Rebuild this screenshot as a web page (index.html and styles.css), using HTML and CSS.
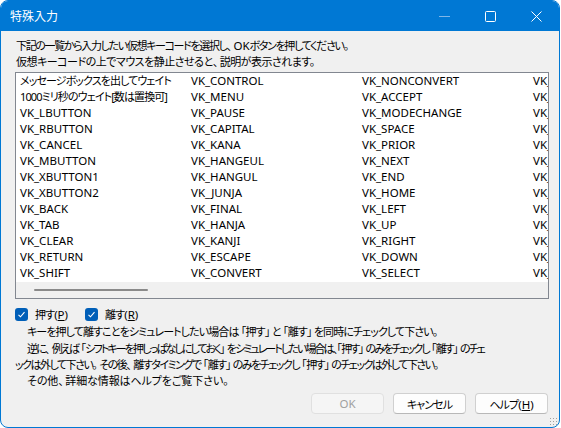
FILE: index.html
```html
<!DOCTYPE html>
<html lang="ja">
<head>
    <meta charset="UTF-8">
    <title>特殊入力</title>
    <link rel="stylesheet" href="styles.css">
</head>
<body>
    <div class="window">
        <div class="titlebar">
            <span class="title">特殊入力</span>
            <div class="controls">
                <span class="ctl ctl-min"><svg width="11" height="11" viewBox="0 0 11 11"><path d="M0 5.5h11" stroke="#7fb6e8" stroke-width="1"/></svg></span>
                <span class="ctl ctl-max"><svg width="11" height="11" viewBox="0 0 11 11"><rect x="0.5" y="0.5" width="10" height="10" rx="1" fill="none" stroke="#fff" stroke-width="1"/></svg></span>
                <span class="ctl ctl-close"><svg width="11" height="11" viewBox="0 0 11 11"><path d="M0.5 0.5l10 10M10.5 0.5l-10 10" stroke="#fff" stroke-width="1"/></svg></span>
            </div>
        </div>

        <div class="content">
            <p class="intro"><span class="ja i1">下記の一覧から入力したい仮想キーコードを選択し<span class="cl">、</span></span>OK<span class="ja i1">ボタンを押してください。</span><br><span class="ja i2">仮想キーコードの上でマウスを静止させると<span class="cl">、</span>説明が表示されます。</span></p>

            <div class="listbox">
                <div class="columns" id="columns">
                    <!-- filled by script -->
                </div>
                <div class="hscroll"><div class="thumb"></div></div>
            </div>

            <div class="checks">
                <label class="check"><span class="box"><svg width="9" height="9" viewBox="0 0 9 9"><path d="M1.5 4.8l2 2 4-4.6" fill="none" stroke="#fff" stroke-width="1.1"/></svg></span><span><span class="ja">押す</span>(<u>P</u>)</span></label>
                <label class="check"><span class="box"><svg width="9" height="9" viewBox="0 0 9 9"><path d="M1.5 4.8l2 2 4-4.6" fill="none" stroke="#fff" stroke-width="1.1"/></svg></span><span><span class="ja">離す</span>(<u>R</u>)</span></label>
            </div>

            <div class="notes ja">
                <p class="note-first">キーを押して離すことをシミュレートしたい場合は<span class="op">「</span>押す<span class="cl">」</span>と<span class="op">「</span>離す<span class="cl">」</span>を同時にチェックして下さい。</p>
                <p><span class="l2">逆に<span class="cl">、</span>例えば<span class="op">「</span>シフトキーを押しっぱなしにしておく<span class="cl">」</span>をシミュレートしたい場合は<span class="cl">、</span><span class="op">「</span>押す<span class="cl">」</span>のみをチェックし<span class="op">「</span>離す<span class="cl">」</span>のチェ</span><br><span class="l3">ックは外して下さい<span class="cl">。</span>その後<span class="cl">、</span>離すタイミングで<span class="op">「</span>離す<span class="cl">」</span>のみをチェックし<span class="op">「</span>押す<span class="cl">」</span>のチェックは外して下さい。</span></p>
                <p class="l4">その他<span class="cl">、</span>詳細な情報はヘルプをご覧下さい。</p>
            </div>

            <div class="buttons">
                <button class="btn" disabled>OK</button>
                <button class="btn"><span class="ja">キャンセル</span></button>
                <button class="btn"><span class="ja">ヘルプ</span>(<u>H</u>)</button>
            </div>
        </div>
        <div class="grip"></div>
    </div>

    <script>
        const keyColumns = [
            ['メッセージボックスを出してウェイト', '1000ミリ秒のウェイト[数は置換可]', 'VK_LBUTTON', 'VK_RBUTTON', 'VK_CANCEL', 'VK_MBUTTON', 'VK_XBUTTON1', 'VK_XBUTTON2', 'VK_BACK', 'VK_TAB', 'VK_CLEAR', 'VK_RETURN', 'VK_SHIFT'],
            ['VK_CONTROL', 'VK_MENU', 'VK_PAUSE', 'VK_CAPITAL', 'VK_KANA', 'VK_HANGEUL', 'VK_HANGUL', 'VK_JUNJA', 'VK_FINAL', 'VK_HANJA', 'VK_KANJI', 'VK_ESCAPE', 'VK_CONVERT'],
            ['VK_NONCONVERT', 'VK_ACCEPT', 'VK_MODECHANGE', 'VK_SPACE', 'VK_PRIOR', 'VK_NEXT', 'VK_END', 'VK_HOME', 'VK_LEFT', 'VK_UP', 'VK_RIGHT', 'VK_DOWN', 'VK_SELECT'],
            ['VK_PRINT', 'VK_EXECUTE', 'VK_SNAPSHOT', 'VK_INSERT', 'VK_DELETE', 'VK_HELP', 'VK_0', 'VK_1', 'VK_2', 'VK_3', 'VK_4', 'VK_5', 'VK_6']
        ];

        const columns = document.getElementById('columns');
        keyColumns.forEach(items => {
            const col = document.createElement('div');
            col.className = 'col';
            items.forEach(name => {
                const row = document.createElement('div');
                row.className = 'item';
                if (!name.startsWith('VK_')) {
                    row.classList.add('ja');
                }
                row.textContent = name;
                col.appendChild(row);
            });
            columns.appendChild(col);
        });
    </script>
</body>
</html>
```

FILE: styles.css
```css
* {
    margin: 0;
    padding: 0;
    box-sizing: border-box;
}

html, body {
    width: 561px;
    height: 428px;
    overflow: hidden;
}

body {
    background: #ffffff;
    font-family: 'Noto Sans', 'Noto Sans CJK JP', sans-serif;
    font-feature-settings: "palt";
    font-size: 11.5px;
    color: #000;
}

/* Japanese runs: narrower, like Yu Gothic UI */
.ja {
    font-size: 11px;
    letter-spacing: -0.9px;
}

/* per-line tracking so wraps land where the dialog has them */
.intro .i1 { letter-spacing: -1.35px; }
.intro .i2 { letter-spacing: -0.5px; }
.notes .l2 { letter-spacing: -1.9px; }
.notes .l3 { letter-spacing: -1.5px; }
.notes .l4 { letter-spacing: -0.1px; }

/* punctuation: full-width form, trimmed on the empty side */
.ja .cl {
    font-feature-settings: normal;
    letter-spacing: -4px;
}

.ja .op {
    font-feature-settings: normal;
    letter-spacing: -0.9px;
    margin-left: -3px;
}

.window {
    position: relative;
    width: 560px;
    height: 428px;
    background: #f0f0f0;
    border: 1px solid #0078d4;
    border-radius: 8px;
    overflow: hidden;
    display: flex;
    flex-direction: column;
}

.titlebar {
    height: 30px;
    background: #0078d4;
    color: #fff;
    display: flex;
    align-items: center;
    padding-left: 9px;
    flex-shrink: 0;
}

.title {
    font-size: 12px;
    flex: 1;
}

.controls {
    display: flex;
    height: 100%;
}

.ctl {
    width: 46px;
    height: 100%;
    display: flex;
    align-items: center;
    justify-content: center;
}

.ctl svg {
    display: block;
}

.content {
    padding: 7px 11px 0 14px;
    flex: 1;
}

.intro {
    line-height: 16px;
    padding-left: 1px;
}

.listbox {
    margin-top: 2px;
    width: 534px;
    height: 227px;
    border: 1px solid #828790;
    background: #fff;
    display: flex;
    flex-direction: column;
    overflow: hidden;
}

.columns {
    display: flex;
    flex: 1;
    padding-left: 4px;
    overflow: hidden;
}

.col {
    width: 171px;
    flex-shrink: 0;
    white-space: nowrap;
}

.item {
    height: 16px;
    line-height: 16px;
}

.hscroll {
    height: 16px;
    background: #f0f0f0;
    position: relative;
    flex-shrink: 0;
}

.thumb {
    position: absolute;
    left: 18px;
    top: 7px;
    width: 114px;
    height: 2px;
    background: #8a8a8a;
    border-radius: 1px;
}

.checks {
    display: flex;
    gap: 17px;
    margin-top: 7px;
    height: 16px;
    align-items: center;
}

.check {
    display: flex;
    align-items: center;
    gap: 7px;
}

.box {
    width: 13px;
    height: 13px;
    background: #005fb8;
    border-radius: 3px;
    display: flex;
    align-items: center;
    justify-content: center;
}

.box svg {
    display: block;
}

.notes {
    margin-top: 2px;
    line-height: 16px;
}

.notes p {
    text-indent: 12px;
    white-space: nowrap;
}

.notes .note-first {
    margin-bottom: 1px;
}

.buttons {
    display: flex;
    justify-content: flex-end;
    gap: 9px;
    margin-top: 4px;
}

.btn {
    width: 73px;
    height: 21px;
    font-family: inherit;
    font-feature-settings: "palt";
    font-size: 11.5px;
    background: #fdfdfd;
    border: 1px solid #d0d0d0;
    border-bottom-color: #b8b8b8;
    border-radius: 4px;
    color: #000;
}

.btn:disabled {
    background: #f5f5f5;
    border-color: #e0e0e0;
    color: #a0a0a0;
}

.grip {
    position: absolute;
    right: 2px;
    bottom: 2px;
    width: 8px;
    height: 8px;
    background-image: radial-gradient(circle, #a0a0a0 0.8px, transparent 1px);
    background-size: 3px 3px;
}
```
